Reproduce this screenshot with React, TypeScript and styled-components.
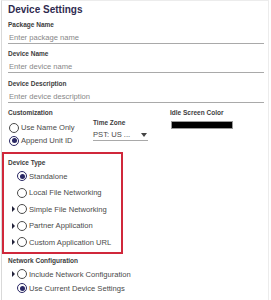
import styled, { createGlobalStyle } from "styled-components";

const GlobalStyle = createGlobalStyle`
  html, body {
    margin: 0;
    padding: 0;
    background: #fff;
  }
  body {
    font-family: "Liberation Sans", Arial, sans-serif;
  }
`;

type RadioOption = {
  label: string;
  checked?: boolean;
  expandable?: boolean;
};

const deviceTypes: RadioOption[] = [
  { label: "Standalone", checked: true },
  { label: "Local File Networking" },
  { label: "Simple File Networking", expandable: true },
  { label: "Partner Application", expandable: true },
  { label: "Custom Application URL", expandable: true },
];

const networkOptions: RadioOption[] = [
  { label: "Include Network Configuration", expandable: true },
  { label: "Use Current Device Settings", checked: true },
];

const App: React.FC = () => {
  return (
    <>
      <GlobalStyle />
      <Panel>
        <Title>Device Settings</Title>

        <Field $bottom={6}>
          <Label>Package Name</Label>
          <TextInput placeholder="Enter package name" />
        </Field>
        <Field>
          <Label>Device Name</Label>
          <TextInput placeholder="Enter device name" />
        </Field>
        <Field>
          <Label>Device Description</Label>
          <TextInput placeholder="Enter device description" />
        </Field>

        <CustomRow>
          <CustomCol $width={85}>
            <Label>Customization</Label>
            <RadioList $gap={4}>
              <RadioRow $height={13}>
                <Radio $checked={false} />
                <RadioText>Use Name Only</RadioText>
              </RadioRow>
              <RadioRow $height={13}>
                <Radio $checked />
                <RadioText>Append Unit ID</RadioText>
              </RadioRow>
            </RadioList>
          </CustomCol>
          <CustomCol $width={77} $top={10}>
            <Label>Time Zone</Label>
            <Select>
              PST: US ...
              <Caret />
            </Select>
          </CustomCol>
          <CustomCol>
            <Label>Idle Screen Color</Label>
            <Swatch />
          </CustomCol>
        </CustomRow>

        <Highlight>
          <Label>Device Type</Label>
          <RadioList $gap={1}>
            {deviceTypes.map((opt) => (
              <RadioRow key={opt.label} $height={16.5}>
                <Expander>{opt.expandable && <Arrow />}</Expander>
                <Radio $checked={!!opt.checked} />
                <RadioText>{opt.label}</RadioText>
              </RadioRow>
            ))}
          </RadioList>
        </Highlight>

        <NetworkBlock>
          <Label>Network Configuration</Label>
          <RadioList $gap={2}>
            {networkOptions.map((opt) => (
              <RadioRow key={opt.label} $height={14}>
                <Expander>{opt.expandable && <Arrow />}</Expander>
                <Radio $checked={!!opt.checked} />
                <RadioText>{opt.label}</RadioText>
              </RadioRow>
            ))}
          </RadioList>
        </NetworkBlock>
      </Panel>
    </>
  );
};

const Panel = styled.div`
  box-sizing: border-box;
  margin-left: 1px;
  width: 268px;
  height: 300px;
  overflow: hidden;
  border-left: 1px solid #d9d9d9;
  border-right: 1px solid #ececec;
  border-top: 1px solid #ececec;
  padding: 3px 4px 0 6px;
`;

const Title = styled.h1`
  margin: 0 0 5px;
  font-size: 10px;
  line-height: 12px;
  font-weight: 700;
  color: #2f2b50;
`;

const Field = styled.div<{ $bottom?: number }>`
  margin-bottom: ${(p) => p.$bottom ?? 7}px;
`;

const Label = styled.div`
  font-size: 6.5px;
  line-height: 8px;
  font-weight: 700;
  color: #3d3d3d;
  white-space: nowrap;
`;

const TextInput = styled.input`
  display: block;
  box-sizing: border-box;
  width: 100%;
  margin: 3px 0 0;
  padding: 0 1px 1px;
  border: 0;
  border-bottom: 1px solid #a9a9a9;
  outline: none;
  background: transparent;
  font-family: "Liberation Sans", Arial, sans-serif;
  font-size: 7.6px;
  line-height: 10px;
  height: 12px;
  color: #333;

  &::placeholder {
    color: #878787;
  }
`;

const CustomRow = styled.div`
  display: flex;
  margin-top: -1px;
`;

const CustomCol = styled.div<{ $width?: number; $top?: number }>`
  flex: ${(p) => (p.$width ? `0 0 ${p.$width}px` : "1 1 auto")};
  padding-top: ${(p) => p.$top ?? 0}px;
`;

const RadioList = styled.div<{ $gap: number }>`
  margin-top: ${(p) => p.$gap}px;
`;

const RadioRow = styled.div<{ $height: number }>`
  display: flex;
  align-items: center;
  height: ${(p) => p.$height}px;
`;

const Radio = styled.span<{ $checked: boolean }>`
  position: relative;
  box-sizing: border-box;
  flex: 0 0 10px;
  width: 10px;
  height: 10px;
  margin-left: 1px;
  border-radius: 50%;
  border: 1px solid ${(p) => (p.$checked ? "#2a2864" : "#4b4b4b")};
  background: #fff;

  &::after {
    content: "";
    display: ${(p) => (p.$checked ? "block" : "none")};
    position: absolute;
    left: 1.5px;
    top: 1.5px;
    width: 5px;
    height: 5px;
    border-radius: 50%;
    background: #2a2864;
  }
`;

const RadioText = styled.span`
  margin-left: 2px;
  font-size: 7.6px;
  color: #4a4a4a;
  white-space: nowrap;
`;

const Expander = styled.span`
  flex: 0 0 8px;
  display: flex;
  align-items: center;
  padding-left: 4px;
  box-sizing: border-box;
`;

const Arrow = styled.span`
  width: 0;
  height: 0;
  border-left: 3.5px solid #22223a;
  border-top: 3px solid transparent;
  border-bottom: 3px solid transparent;
`;

const Select = styled.div`
  position: relative;
  box-sizing: border-box;
  width: 55px;
  margin-top: 3px;
  height: 11px;
  line-height: 10px;
  font-size: 7.6px;
  color: #4a4a4a;
  border-bottom: 1px solid #a9a9a9;
`;

const Caret = styled.span`
  position: absolute;
  right: 1px;
  top: 3px;
  width: 0;
  height: 0;
  border-top: 4px solid #444;
  border-left: 3.5px solid transparent;
  border-right: 3.5px solid transparent;
`;

const Swatch = styled.div`
  box-sizing: border-box;
  width: 62px;
  height: 8px;
  margin-top: 4px;
  margin-left: 1px;
  background: #000;
  border: 1px solid #9a9a9a;
`;

const Highlight = styled.div`
  box-sizing: border-box;
  width: 121px;
  margin: 5px 0 0 -6px;
  padding: 5px 0 0 4px;
  border: 2px solid #d0283b;
  height: 102px;
`;

const NetworkBlock = styled.div`
  margin-top: 3px;
`;

export default App;
